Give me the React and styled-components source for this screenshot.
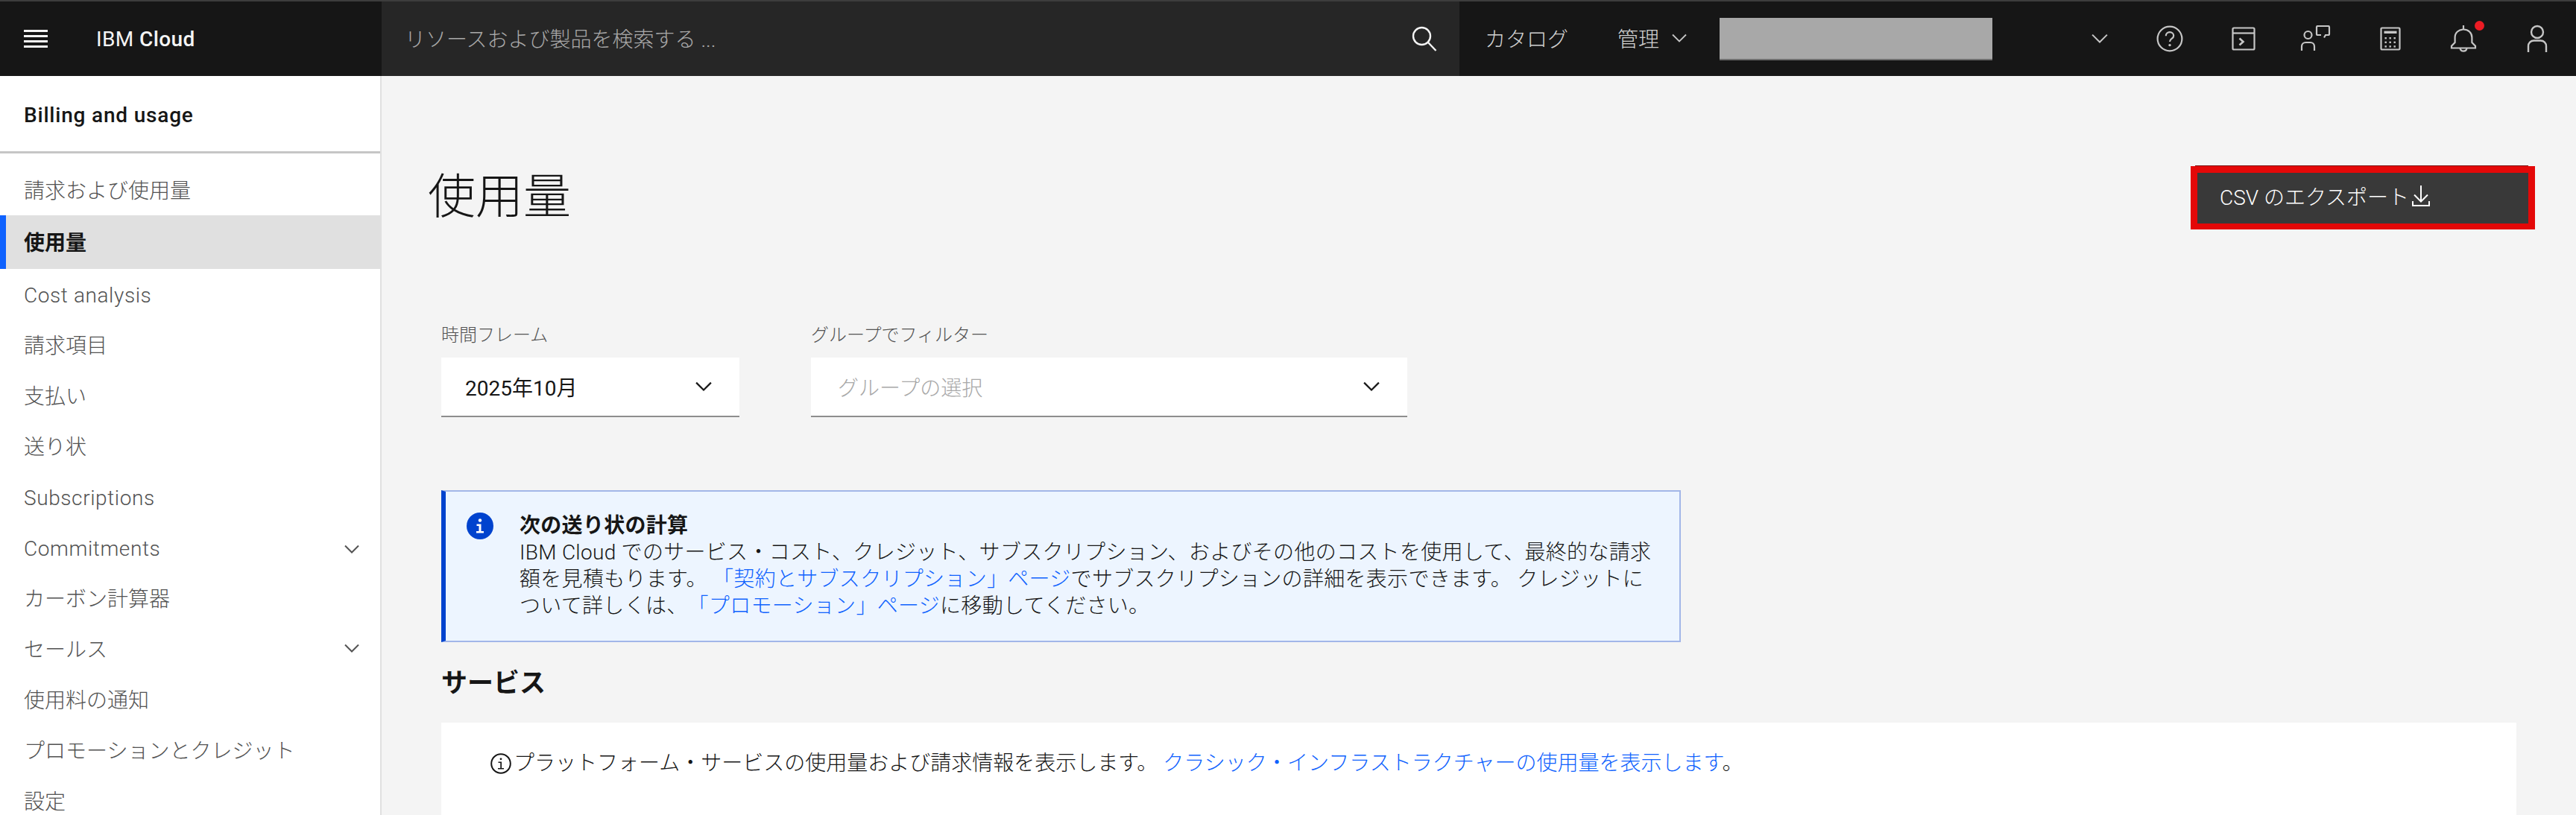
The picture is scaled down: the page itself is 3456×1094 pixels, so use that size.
import { createGlobalStyle, styled } from "styled-components";

const FONT = `Roboto, "Noto Sans CJK JP", sans-serif`;

const GlobalStyle = createGlobalStyle`
  html, body {
    margin: 0;
    padding: 0;
    background: #f4f4f4;
  }
  * {
    box-sizing: border-box;
  }
  body {
    font-family: ${FONT};
    overflow: hidden;
  }
`;

const navItems = [
  { label: "請求および使用量" },
  { label: "使用量", active: true },
  { label: "Cost analysis", latin: true },
  { label: "請求項目" },
  { label: "支払い" },
  { label: "送り状" },
  { label: "Subscriptions", latin: true },
  { label: "Commitments", latin: true, more: true },
  { label: "カーボン計算器" },
  { label: "セールス", more: true },
  { label: "使用料の通知" },
  { label: "プロモーションとクレジット" },
  { label: "設定" },
];

function Chevron({ size = 20, color = "currentColor", width = 2 }) {
  return (
    <svg width={size} height={size * 0.6} viewBox="0 0 20 12" fill="none">
      <path d="M1 1.5 10 10.5 19 1.5" stroke={color} strokeWidth={width} />
    </svg>
  );
}

function SearchIcon() {
  return (
    <svg width="36" height="36" viewBox="0 0 36 36" fill="none" stroke="#f4f4f4" strokeWidth="2.4">
      <circle cx="14.5" cy="14.5" r="11.5" />
      <path d="M23 23 33.5 34" />
    </svg>
  );
}

function HelpIcon() {
  return (
    <svg width="36" height="36" viewBox="0 0 36 36" fill="none" stroke="#c6c6c6" strokeWidth="2.2">
      <circle cx="18" cy="18" r="16.4" />
      <path d="M12.8 14.2c0-3 2.3-5 5.2-5s5.2 1.9 5.2 4.7c0 4.3-5.2 3.6-5.2 8" />
      <circle cx="18" cy="26.6" r="1.7" fill="#c6c6c6" stroke="none" />
    </svg>
  );
}

function TerminalIcon() {
  return (
    <svg width="32" height="32" viewBox="0 0 32 32" fill="none" stroke="#c6c6c6" strokeWidth="2.2">
      <rect x="1.5" y="1.5" width="29" height="29" rx="1.5" />
      <path d="M1.5 8.5h29" />
      <path d="M10.5 15.5 15.5 20 10.5 24.5" strokeWidth="2.6" />
    </svg>
  );
}

function ChatPersonIcon() {
  return (
    <svg width="44" height="36" viewBox="0 0 44 36" fill="none" stroke="#c6c6c6" strokeWidth="2.2">
      <circle cx="10.5" cy="13" r="5" />
      <path d="M2 34v-5.5c0-3.2 2.3-5.5 5.5-5.5h6c3.2 0 5.5 2.3 5.5 5.5V34" />
      <path d="M28 13h-4.5c-.8 0-1.5-.7-1.5-1.5v-9c0-.8.7-1.5 1.5-1.5h14c.8 0 1.5.7 1.5 1.5v9c0 .8-.7 1.5-1.5 1.5H34l-2 3.5" />
    </svg>
  );
}

function CalculatorIcon() {
  const dots = [];
  for (let r = 0; r < 3; r++) {
    for (let c = 0; c < 3; c++) {
      dots.push(<rect key={`${r}-${c}`} x={6.5 + c * 6} y={14 + r * 5.6} width="2.4" height="2.4" fill="#c6c6c6" stroke="none" />);
    }
  }
  return (
    <svg width="28" height="32" viewBox="0 0 28 32" fill="none" stroke="#c6c6c6" strokeWidth="2.2">
      <rect x="1.5" y="1.5" width="25" height="29" rx="1.2" />
      <rect x="5.5" y="5.6" width="17" height="3.4" fill="#c6c6c6" stroke="none" />
      {dots}
    </svg>
  );
}

function BellIcon() {
  return (
    <svg width="36" height="38" viewBox="0 0 36 38" fill="none" stroke="#c6c6c6" strokeWidth="2.2">
      <path d="M18 1v6" />
      <path d="M2 31.5v-2.8l4.6-4.6v-6.8C6.6 10.8 11.6 6.5 18 6.5s11.4 4.3 11.4 10.8v6.8l4.6 4.6v2.8z" />
      <path d="M13.5 32a4.6 4.6 0 0 0 9 0" />
    </svg>
  );
}

function UserIcon() {
  return (
    <svg width="28" height="38" viewBox="0 0 28 38" fill="none" stroke="#c6c6c6" strokeWidth="2.4">
      <circle cx="14" cy="10" r="8" />
      <path d="M2 37v-8c0-4.400 3.200-7.500 7.500-7.500h9c4.300 0 7.500 3.100 7.500 7.500v8" />
    </svg>
  );
}

function DownloadIcon() {
  return (
    <svg width="24" height="28" viewBox="0 0 24 28" fill="none" stroke="#ffffff" strokeWidth="2">
      <path d="M12 0v21" />
      <path d="M3 12.500 12 21.500 21 12.500" />
      <path d="M1 21v6h22v-6" />
    </svg>
  );
}

function InfoFilled() {
  return (
    <svg width="36" height="36" viewBox="0 0 36 36">
      <circle cx="18" cy="18" r="18" fill="#0043ce" />
      <circle cx="18" cy="10.500" r="2.200" fill="#ffffff" />
      <path d="M13.500 15.500h6v9.500h3.500v2.500H13v-2.500h3.500v-7h-3z" fill="#ffffff" />
    </svg>
  );
}

function InfoOutline() {
  return (
    <svg width="28" height="28" viewBox="0 0 28 28" fill="none">
      <circle cx="14" cy="14" r="12.800" stroke="#161616" strokeWidth="2" />
      <circle cx="14" cy="7.800" r="1.400" fill="#161616" />
      <path d="M10.500 11.500h4.500v8.500h3v1.600h-8v-1.600h3.300v-6.900h-2.800z" fill="#161616" />
    </svg>
  );
}

export default function App() {
  return (
    <Page>
      <GlobalStyle />
      <Header>
        <Brand>
          <Hamburger>
            <span />
            <span />
            <span />
            <span />
          </Hamburger>
          <BrandName>
            IBM <b>Cloud</b>
          </BrandName>
        </Brand>
        <SearchBar>
          <SearchHint>リソースおよび製品を検索する ...</SearchHint>
          <SearchIcon />
        </SearchBar>
        <HeaderLink $left={34}>カタログ</HeaderLink>
        <HeaderLink $left={66}>
          管理
          <Chevron size={20} color="#c6c6c6" width={1.8} />
        </HeaderLink>
        <AccountBox />
        <AccountChevron>
          <Chevron size={22} color="#c6c6c6" width={1.8} />
        </AccountChevron>
        <IconSlot><HelpIcon /></IconSlot>
        <IconSlot><TerminalIcon /></IconSlot>
        <IconSlot><ChatPersonIcon /></IconSlot>
        <IconSlot><CalculatorIcon /></IconSlot>
        <IconSlot>
          <BellIcon />
          <RedDot />
        </IconSlot>
        <IconSlot><UserIcon /></IconSlot>
      </Header>
      <Body>
        <Sidebar>
          <SideTitle>Billing and usage</SideTitle>
          <SideNav>
            {navItems.map((item) => (
              <SideItem key={item.label} $active={item.active} $latin={item.latin}>
                {item.label}
                {item.more && <Chevron size={20} color="#525252" width={2} />}
              </SideItem>
            ))}
          </SideNav>
        </Sidebar>
        <Main>
          <PageHead>
            <PageTitle>使用量</PageTitle>
            <ExportButton>
              CSV のエクスポート
              <DownloadIcon />
            </ExportButton>
          </PageHead>
          <Content>
            <Filters>
              <Field>
                <FieldLabel>時間フレーム</FieldLabel>
                <Select $width={400}>
                  2025年10月
                  <Chevron size={22} color="#161616" width={2} />
                </Select>
              </Field>
              <Field>
                <FieldLabel>グループでフィルター</FieldLabel>
                <Select $width={800} $placeholder>
                  グループの選択
                  <Chevron size={22} color="#161616" width={2} />
                </Select>
              </Field>
            </Filters>
            <Notice>
              <InfoFilled />
              <NoticeText>
                <NoticeTitle>次の送り状の計算</NoticeTitle>
                IBM Cloud でのサービス・コスト、クレジット、サブスクリプション、およびその他のコストを使用して、最終的な請求
                <br />
                額を見積もります。 <BlueLink>「契約とサブスクリプション」ページ</BlueLink>でサブスクリプションの詳細を表示できます。 クレジットに
                <br />
                ついて詳しくは、<BlueLink>「プロモーション」ページ</BlueLink>に移動してください。
              </NoticeText>
            </Notice>
            <SectionTitle>サービス</SectionTitle>
            <Card>
              <InfoOutline />
              <CardText>
                プラットフォーム・サービスの使用量および請求情報を表示します。 <BlueLink>クラシック・インフラストラクチャーの使用量を表示します</BlueLink>。
              </CardText>
            </Card>
          </Content>
        </Main>
      </Body>
    </Page>
  );
}

const Page = styled.div`
  width: 3456px;
  height: 1094px;
  overflow: hidden;
  display: flex;
  flex-direction: column;
  background: #f4f4f4;
`;

const Header = styled.header`
  height: 102px;
  flex-shrink: 0;
  display: flex;
  align-items: stretch;
  background: #161616;
  border-top: 2px solid #3d3d3d;
  color: #c6c6c6;
`;

const Brand = styled.div`
  width: 512px;
  flex-shrink: 0;
  display: flex;
  align-items: center;
  padding-left: 32px;
`;

const Hamburger = styled.div`
  width: 32px;
  height: 24px;
  display: flex;
  flex-direction: column;
  justify-content: space-between;

  span {
    display: block;
    height: 2.500px;
    background: #f4f4f4;
  }
`;

const BrandName = styled.div`
  margin-left: 65px;
  font-size: 28px;
  color: #f4f4f4;
  letter-spacing: 0.4px;

  b {
    font-weight: 500;
  }
`;

const SearchBar = styled.div`
  width: 1446px;
  flex-shrink: 0;
  display: flex;
  align-items: center;
  justify-content: space-between;
  padding: 0 29px 0 31px;
  background: #262626;
`;

const SearchHint = styled.span`
  padding-bottom: 3px;
  font-size: 28px;
  color: #a8a8a8;
  font-weight: 300;
`;

const HeaderLink = styled.div`
  margin-left: ${(p) => p.$left}px;
  padding-bottom: 3px;
  display: flex;
  align-items: center;
  gap: 17px;
  font-size: 28px;
  font-weight: 300;
  color: #d0d0d0;
`;

const AccountBox = styled.div`
  width: 366px;
  height: 57px;
  margin: 22px 0 0 44px;
  background: #a8a8a8;
  border-bottom: 2px solid #6f6f6f;
`;

const AccountChevron = styled.div`
  margin-left: 133px;
  width: 56px;
  display: flex;
  align-items: center;
`;

const IconSlot = styled.div`
  position: relative;
  width: 98.500px;
  display: flex;
  align-items: center;
  justify-content: center;
`;

const RedDot = styled.span`
  position: absolute;
  top: 26px;
  left: 64px;
  width: 13px;
  height: 13px;
  border-radius: 50%;
  background: #ec1c24;
`;

const Body = styled.div`
  flex: 1;
  display: flex;
  min-height: 0;
`;

const Sidebar = styled.aside`
  width: 512px;
  flex-shrink: 0;
  background: #ffffff;
  border-right: 2px solid #e0e0e0;
`;

const SideTitle = styled.div`
  height: 104px;
  display: flex;
  align-items: center;
  padding: 3px 0 0 32px;
  border-bottom: 3px solid #c6c6c6;
  font-size: 28px;
  font-weight: 500;
  letter-spacing: 0.8px;
  color: #161616;
`;

const SideNav = styled.nav`
  padding-top: 15px;
`;

const SideItem = styled.div`
  height: ${(p) => (p.$active ? 72 : 68)}px;
  display: flex;
  align-items: center;
  justify-content: space-between;
  padding: ${(p) => (p.$latin ? "3px 28px 0 32px" : "0 28px 3px 32px")};
  font-size: 28px;
  font-weight: ${(p) => (p.$active ? 600 : 300)};
  color: ${(p) => (p.$active ? "#161616" : "#525252")};
  letter-spacing: ${(p) => (p.$latin ? "0.6px" : "0")};
  background: ${(p) => (p.$active ? "#e0e0e0" : "transparent")};
  box-shadow: ${(p) => (p.$active ? "inset 8px 0 0 #0f62fe" : "none")};
`;

const Main = styled.main`
  flex: 1;
  min-width: 0;
`;

const PageHead = styled.div`
  display: flex;
  justify-content: space-between;
  align-items: flex-start;
  padding: 121px 55px 0 62px;
`;

const PageTitle = styled.h1`
  margin: 2px 0 0;
  font-size: 64px;
  line-height: 80px;
  font-weight: 300;
  color: #161616;
`;

const ExportButton = styled.button`
  position: relative;
  width: 462px;
  height: 85px;
  display: flex;
  align-items: center;
  gap: 4px;
  padding: 0 0 6px 30px;
  border-style: solid;
  border-color: #e40808;
  border-width: 9px 9px 8px 9px;
  background: #393939;
  color: #ffffff;
  font-family: ${FONT};
  font-size: 28px;
  font-weight: 300;

  &::before {
    content: "";
    position: absolute;
    top: -10px;
    left: -3px;
    right: 0;
    height: 1px;
    background: #7a1010;
  }
`;

const Content = styled.div`
  padding: 0 80px;
`;

const Filters = styled.div`
  display: flex;
  gap: 96px;
  margin-top: 126px;
`;

const Field = styled.div`
  display: flex;
  flex-direction: column;
`;

const FieldLabel = styled.label`
  font-size: 24px;
  line-height: 32px;
  font-weight: 300;
  color: #525252;
  margin-bottom: 14px;
`;

const Select = styled.div`
  width: ${(p) => p.$width}px;
  height: 80px;
  display: flex;
  align-items: center;
  justify-content: space-between;
  padding: 0 37px 0 ${(p) => (p.$placeholder ? 36 : 32)}px;
  background: #ffffff;
  border-bottom: 2px solid #8d8d8d;
  font-size: 28px;
  font-weight: ${(p) => (p.$placeholder ? 300 : 400)};
  color: ${(p) => (p.$placeholder ? "#a8a8a8" : "#161616")};
`;

const Notice = styled.div`
  width: 1663px;
  height: 204px;
  margin-top: 98px;
  display: flex;
  gap: 35px;
  padding: 28px 0 0 28px;
  background: #edf5ff;
  border: 2px solid #a2b6e8;
  border-left: 6px solid #0043ce;
`;

const NoticeText = styled.div`
  font-size: 28px;
  line-height: 36px;
  font-weight: 300;
  letter-spacing: 0.3px;
  text-spacing-trim: space-all;
  color: #161616;
  white-space: nowrap;
`;

const NoticeTitle = styled.div`
  font-weight: 600;
`;

const BlueLink = styled.a`
  color: #0f62fe;
`;

const SectionTitle = styled.h2`
  margin: 30px 0 0;
  font-size: 35px;
  line-height: 52px;
  font-weight: 600;
  color: #161616;
`;

const Card = styled.section`
  width: 2784px;
  height: 200px;
  margin-top: 26px;
  display: flex;
  align-items: flex-start;
  gap: 3px;
  padding: 41px 0 0 66px;
  background: #ffffff;
`;

const CardText = styled.p`
  margin: 0;
  font-size: 28px;
  line-height: 28px;
  font-weight: 300;
  color: #161616;
  white-space: nowrap;
`;
